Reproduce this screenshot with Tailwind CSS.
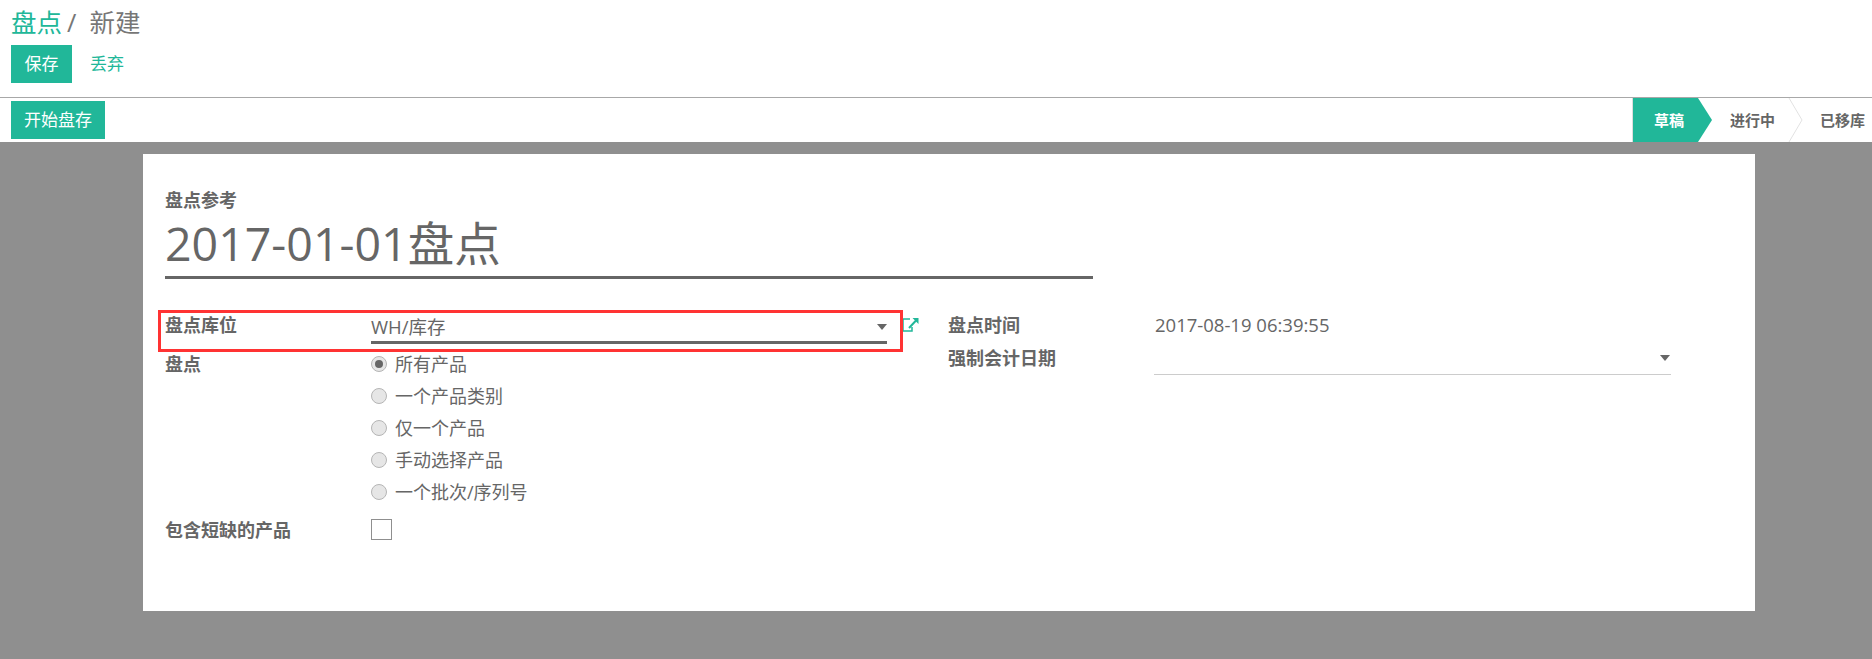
<!DOCTYPE html>
<html lang="zh-CN">
<head>
  <meta charset="UTF-8" />
  <title>盘点</title>
  <script src="https://cdn.jsdelivr.net/npm/@tailwindcss/browser@4"></script>
</head>
<body class="h-[659px] overflow-hidden bg-[#8f8f8f] font-['Open_Sans','Noto_Sans_CJK_SC',sans-serif] text-[#666666]">

<!-- Control panel -->
<header class="bg-white h-[97px] pl-[11px] pt-[6px]">
  <div class="h-[32px] flex items-center text-[25.5px] leading-[32px]">
    <span class="text-[#21b799]">盘点</span>
    <span class="text-[#777777] ml-[5px]">/</span>
    <span class="text-[#777777] ml-[13px]">新建</span>
  </div>
  <div class="flex items-center mt-[7px]">
    <button class="w-[61px] h-[38px] bg-[#21b799] text-white text-[17px]">保存</button>
    <button class="ml-[18px] text-[#21b799] text-[17px]">丢弃</button>
  </div>
</header>

<!-- Status bar -->
<div class="h-[45px] bg-white border-t border-[#a8a8a8] flex justify-between pl-[11px] pt-[3px]">
  <button class="w-[94px] h-[38px] bg-[#21b799] text-white text-[17px]">开始盘存</button>
  <div class="flex h-[44px] -mt-[3px] text-[15px] font-bold">
    <div class="relative w-[66px] bg-[#21b799] text-white flex items-center pl-[21px] border-l border-[#dddddd]">
      草稿
      <svg class="absolute left-[65px] top-0" width="14" height="44" viewBox="0 0 14 44"><path d="M0 0L14 22L0 44Z" fill="#21b799"/></svg>
    </div>
    <div class="relative w-[105px] flex items-center pl-[32px]">
      进行中
      <svg class="absolute left-[90px] top-0" width="15" height="44" viewBox="0 0 15 44"><path d="M1 0L14 22L1 44" fill="none" stroke="#e2e2e2"/></svg>
    </div>
    <div class="w-[69px] flex items-center pl-[17px] whitespace-nowrap">已移库</div>
  </div>
</div>

<!-- Form sheet -->
<main class="relative bg-white w-[1612px] h-[457px] ml-[143px] mt-[12px] pl-[22px] pt-[36px] text-[18px]">
  <div class="font-bold text-[18px] leading-[20px]">盘点参考</div>
  <div class="w-[928px] h-[66px] border-b-[3px] border-[#666666] text-[46.5px] leading-[60px] mt-[3px]">2017-01-01盘点</div>

  <div class="flex mt-[33px]">
    <!-- Left column -->
    <div class="w-[783px]">
      <div class="flex h-[34px]">
        <label class="w-[206px] font-bold leading-[26px]">盘点库位</label>
        <div class="w-[516px] h-[32px] border-b-[3px] border-[#666666] flex justify-between items-center leading-[28px] text-[18.5px]">
          <span>WH/库存</span>
          <span class="w-0 h-0 border-x-[5px] border-x-transparent border-t-[6px] border-t-[#666666]"></span>
        </div>
        <svg class="ml-[15px] mt-[4px]" width="18" height="18" viewBox="0 0 18 18" fill="none" stroke="#21b799" stroke-width="1.5"><path d="M8 3H1V15H10V11"/><path d="M7 12L15 3.5" stroke-width="2"/><path d="M10.5 2H16.5V8Z" fill="#21b799" stroke="none"/></svg>
      </div>
      <div class="flex mt-[5px]">
        <label class="w-[206px] font-bold leading-[26px]">盘点</label>
        <div class="flex flex-col">
          <div class="flex items-center h-[32px] -mt-[3px]">
            <span class="w-[16px] h-[16px] rounded-full border border-[#b5b5b5] bg-[#e6e6e6] flex items-center justify-center"><span class="w-[8px] h-[8px] rounded-full bg-[#666666]"></span></span>
            <span class="ml-[8px]">所有产品</span>
          </div>
          <div class="flex items-center h-[32px]">
            <span class="w-[16px] h-[16px] rounded-full border border-[#b5b5b5] bg-[#e6e6e6]"></span>
            <span class="ml-[8px]">一个产品类别</span>
          </div>
          <div class="flex items-center h-[32px]">
            <span class="w-[16px] h-[16px] rounded-full border border-[#b5b5b5] bg-[#e6e6e6]"></span>
            <span class="ml-[8px]">仅一个产品</span>
          </div>
          <div class="flex items-center h-[32px]">
            <span class="w-[16px] h-[16px] rounded-full border border-[#b5b5b5] bg-[#e6e6e6]"></span>
            <span class="ml-[8px]">手动选择产品</span>
          </div>
          <div class="flex items-center h-[32px]">
            <span class="w-[16px] h-[16px] rounded-full border border-[#b5b5b5] bg-[#e6e6e6]"></span>
            <span class="ml-[8px]">一个批次/序列号</span>
          </div>
        </div>
      </div>
      <div class="flex mt-[11px]">
        <label class="w-[206px] font-bold leading-[22px]">包含短缺的产品</label>
        <span class="w-[21px] h-[21px] border border-[#8f8f8f]"></span>
      </div>
    </div>

    <!-- Right column -->
    <div class="w-[723px]">
      <div class="flex h-[34px]">
        <label class="w-[207px] font-bold leading-[26px]">盘点时间</label>
        <span class="leading-[26px] text-[18.5px]">2017-08-19 06:39:55</span>
      </div>
      <div class="flex">
        <label class="w-[206px] font-bold leading-[26px] -mt-[1px]">强制会计日期</label>
        <div class="w-[517px] h-[30px] border-b border-[#cccccc] flex justify-end items-start pt-[7px] -mt-[1px] pr-[1px]">
          <span class="w-0 h-0 border-x-[5px] border-x-transparent border-t-[6px] border-t-[#666666] mt-[3px]"></span>
        </div>
      </div>
    </div>
  </div>

  <!-- Annotation over the form -->
  <div class="absolute left-[15px] top-[156px] w-[745px] h-[42px] border-[3px] border-[#ff3333]"></div>
</main>

</body>
</html>
